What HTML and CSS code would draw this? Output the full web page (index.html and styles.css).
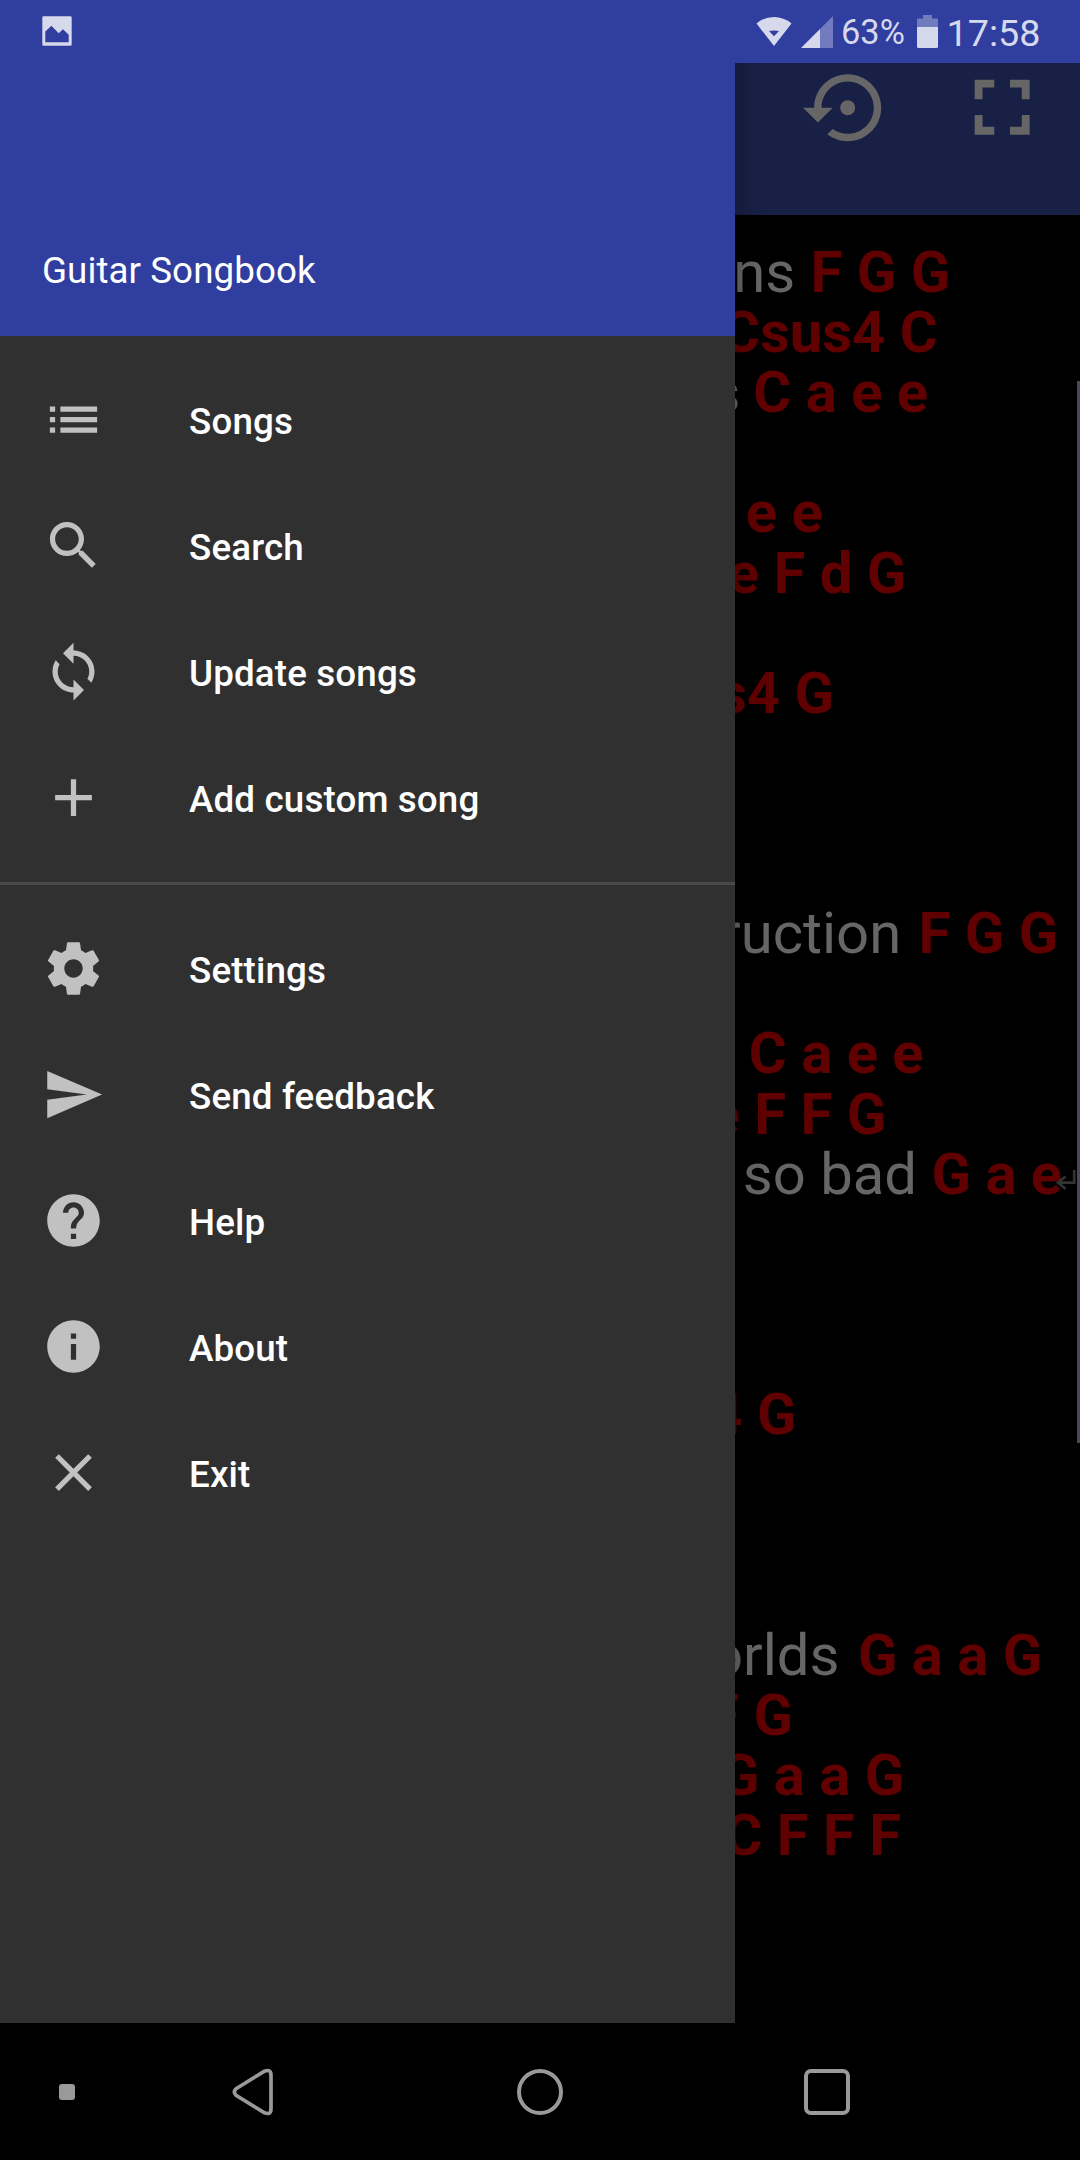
FILE: index.html
```html
<!DOCTYPE html>
<html lang="en">
<head>
<meta charset="utf-8">
<title>Guitar Songbook</title>
<link rel="stylesheet" href="styles.css">
</head>
<body>
<div class="phone">
  <header class="status-bar">
    <svg class="status-photo" viewBox="0 0 30 30"><path fill-rule="evenodd" d="M1.6.3h26.8q1.3 0 1.3 1.3v26.8q0 1.3-1.3 1.3H1.6Q.3 29.700.3 28.400V1.600Q.3.3 1.600.3zM3.300 15.600V26.300H26.700V18.700L21 13.300 16.700 17.300 9.400 9.800z"/></svg>
    <svg class="status-wifi" viewBox="0 0 36 30"><path fill-rule="evenodd" d="M.5 7.500Q8 1 18 1T35.500 7.500L18 30zM13 15Q18 13.800 23 15L18 20.200z"/></svg>
    <svg class="status-signal" viewBox="0 0 32 32"><path opacity=".4" d="M19 13 32 0V32H19z"/><path d="M0 32 19 13V32z"/></svg>
    <span class="status-percent">63%</span>
    <svg class="status-battery" viewBox="0 0 21 33"><path opacity=".4" d="M6 0H15V3.500H20Q21 3.500 21 4.500V12H0V4.500Q0 3.500 1 3.500H6z"/><path d="M0 12H21V31.500Q21 33 19.500 33H1.500Q0 33 0 31.500z"/></svg>
    <span class="status-clock">17:58</span>
  </header>

  <div class="screen">
    <main class="reader">
      <div class="app-bar">
        <svg class="icon-restore" viewBox="0 0 24 24"><path d="M14 12c0-1.100-.9-2-2-2s-2 .9-2 2 .9 2 2 2 2-.9 2-2zm-2-9c-4.970 0-9 4.030-9 9H0l4 4 4-4H5c0-3.870 3.130-7 7-7s7 3.130 7 7-3.130 7-7 7c-1.510 0-2.910-.49-4.060-1.300l-1.420 1.440C8.040 20.300 9.940 21 12 21c4.970 0 9-4.030 9-9s-4.030-9-9-9z"/></svg>
        <svg class="icon-fullscreen" viewBox="0 0 24 24"><path d="M7 14H5v5h5v-2H7v-3zm-2-4h2V7h3V5H5v5zm12 7h-3v2h5v-5h-2v3zM14 5v2h3v3h2V5h-5z"/></svg>
      </div>
      <div class="song">
        <p class="l1">ns <b>F G G</b></p>
        <p class="l2"><b>Csus4 C</b></p>
        <p class="l3">s <b>C a e e</b></p>
        <p></p>
        <p class="l5"><b>e e</b></p>
        <p class="l6"><b>e F d G</b></p>
        <p></p>
        <p class="l8"><b>s4 G</b></p>
        <p></p>
        <p></p>
        <p></p>
        <p class="l12">ruction <b>F G G</b></p>
        <p></p>
        <p class="l14"><b>C a e e</b></p>
        <p class="l15"><b>e F F G</b></p>
        <p class="l16">so bad <b>G a e</b><svg class="wrap-mark" viewBox="0 0 20 20"><path d="M18.200 0V12.700H2M9.500 6.500 2 12.700 9.500 18.800"/></svg></p>
        <p></p>
        <p></p>
        <p></p>
        <p class="l20"><b>4 G</b></p>
        <p></p>
        <p></p>
        <p></p>
        <p class="l24">orlds <b>G a a G</b></p>
        <p class="l25"><b>F G</b></p>
        <p class="l26"><b>G a a G</b></p>
        <p class="l27"><b>C F F F</b></p>
      </div>
      <div class="scrollbar"></div>
    </main>
  </div>

  <aside class="drawer">
    <div class="drawer-header">Guitar Songbook</div>
    <nav class="menu">
      <a class="item"><svg viewBox="0 0 24 24"><path d="M3 13h2v-2H3v2zm0 4h2v-2H3v2zm0-8h2V7H3v2zm4 4h14v-2H7v2zm0 4h14v-2H7v2zM7 7v2h14V7H7z"/></svg><span>Songs</span></a>
      <a class="item"><svg viewBox="0 0 24 24"><path d="M15.500 14h-.79l-.28-.27C15.410 12.590 16 11.110 16 9.500 16 5.910 13.090 3 9.500 3S3 5.910 3 9.500 5.910 16 9.500 16c1.610 0 3.090-.59 4.230-1.570l.27.28v.79l5 4.990L20.490 19l-4.990-5zm-6 0C7.010 14 5 11.990 5 9.500S7.010 5 9.500 5 14 7.010 14 9.500 11.990 14 9.500 14z"/></svg><span>Search</span></a>
      <a class="item"><svg viewBox="0 0 24 24"><path d="M12 4V1L8 5l4 4V6c3.310 0 6 2.690 6 6 0 1.010-.25 1.970-.7 2.800l1.460 1.460C19.540 15.030 20 13.570 20 12c0-4.420-3.580-8-8-8zm0 14c-3.310 0-6-2.690-6-6 0-1.010.25-1.970.7-2.800L5.240 7.740C4.460 8.970 4 10.430 4 12c0 4.420 3.580 8 8 8v3l4-4-4-4v3z"/></svg><span>Update songs</span></a>
      <a class="item"><svg viewBox="0 0 24 24"><path d="M19 13h-6v6h-2v-6H5v-2h6V5h2v6h6v2z"/></svg><span>Add custom song</span></a>
      <hr class="divider">
      <a class="item"><svg viewBox="0 0 24 24"><path d="M19.430 12.980c.04-.32.070-.64.070-.98s-.03-.66-.07-.98l2.110-1.650c.19-.15.240-.42.120-.64l-2-3.460c-.12-.22-.39-.3-.61-.22l-2.490 1c-.52-.4-1.080-.73-1.690-.98l-.38-2.650C14.460 2.180 14.250 2 14 2h-4c-.25 0-.46.18-.49.42l-.38 2.650c-.61.25-1.170.59-1.690.98l-2.490-1c-.23-.09-.49 0-.61.22l-2 3.460c-.13.22-.07.49.12.64l2.110 1.650c-.04.32-.07.65-.07.98s.03.66.07.98l-2.110 1.650c-.19.15-.24.42-.12.64l2 3.460c.12.22.39.3.61.22l2.490-1c.52.4 1.080.73 1.690.98l.38 2.650c.03.24.24.42.49.42h4c.25 0 .46-.18.49-.42l.38-2.650c.61-.25 1.170-.59 1.690-.98l2.490 1c.23.09.49 0 .61-.22l2-3.460c.12-.22.07-.49-.12-.64l-2.110-1.650zM12 15.500c-1.930 0-3.500-1.570-3.500-3.500s1.570-3.500 3.500-3.500 3.500 1.570 3.500 3.500-1.570 3.500-3.500 3.500z"/></svg><span>Settings</span></a>
      <a class="item"><svg viewBox="0 0 24 24"><path d="M2 3 22.900 12 2 21V14L17 12 2 10z"/></svg><span>Send feedback</span></a>
      <a class="item"><svg viewBox="0 0 24 24"><path d="M12 2C6.480 2 2 6.480 2 12s4.480 10 10 10 10-4.480 10-10S17.520 2 12 2zm1 17h-2v-2h2v2zm2.070-7.750l-.9.920C13.450 12.900 13 13.500 13 15h-2v-.5c0-1.100.45-2.100 1.170-2.830l1.240-1.260c.37-.36.590-.86.590-1.410 0-1.100-.9-2-2-2s-2 .9-2 2H8c0-2.210 1.790-4 4-4s4 1.790 4 4c0 .88-.36 1.680-.93 2.250z"/></svg><span>Help</span></a>
      <a class="item"><svg viewBox="0 0 24 24"><path d="M12 2C6.480 2 2 6.480 2 12s4.480 10 10 10 10-4.480 10-10S17.520 2 12 2zm1 15h-2v-6h2v6zm0-8h-2V7h2v2z"/></svg><span>About</span></a>
      <a class="item"><svg viewBox="0 0 24 24"><path d="M19 6.410 17.590 5 12 10.590 6.410 5 5 6.410 10.590 12 5 17.590 6.410 19 12 13.410 17.590 19 19 17.590 13.410 12z"/></svg><span>Exit</span></a>
    </nav>
  </aside>

  <footer class="nav-bar">
    <i class="nav-dot"></i>
    <svg class="nav-back" viewBox="0 0 42 48"><path d="M4 20.800 32 3.500Q39 .3 39 7.500V40.500Q39 47.700 32 44.500L4 27.200Q.8 24 4 20.800z"/></svg>
    <i class="nav-home"></i>
    <i class="nav-recents"></i>
  </footer>
</div>
</body>
</html>
```
FILE: styles.css
```css
* { box-sizing: border-box; }

body {
  margin: 0;
  background: #000;
  font-family: Roboto, sans-serif;
}

.phone {
  position: relative;
  display: flex;
  flex-direction: column;
  width: 1080px;
  height: 2160px;
  overflow: hidden;
  background: #000;
}

svg { display: block; flex: none; }

/* Status bar */
.status-bar {
  display: flex;
  align-items: flex-start;
  height: 63px;
  background: #303e9f;
  color: #d6d8ec;
  fill: #d6d8ec;
  position: relative;
  z-index: 2;
}
.status-photo { width: 30px; height: 30px; margin: 16px 684px 0 42px; }
.status-wifi { width: 36px; height: 30px; margin: 16px 9px 0 0; }
.status-signal { width: 32px; height: 32px; margin: 16px 0 0; }
.status-percent { width: 76px; margin: 12px 0 0 8px; font-size: 34.400px; line-height: 41px; }
.status-battery { width: 21px; height: 33px; margin-top: 15px; }
.status-clock { margin: 11px 0 0 8.500px; font-size: 37.750px; line-height: 44px; }

/* Dimmed song view behind the drawer */
.screen { height: 1960px; }
.reader { position: relative; height: 100%; }
.app-bar {
  display: flex;
  justify-content: flex-end;
  height: 152px;
  padding-right: 30.300px;
  background: #182046;
  fill: #666;
}
.icon-restore { width: 89.400px; height: 89.400px; margin-right: 63px; }
.icon-fullscreen { width: 94.300px; height: 94.300px; margin-top: -2.700px; }

.song {
  padding-top: 27px;
  color: #666;
  font-size: 58px;
  line-height: 60.115px;
  text-align: right;
  white-space: nowrap;
}
.song p { position: relative; height: 60.115px; margin: 0; }
.song b { color: #600000; font-weight: 700; }
.song .l1 { padding-right: 129.700px; }
.song .l1 b { margin-left: 1px; }
.song .l2 { padding-right: 142.300px; }
.song .l3 { padding-right: 151.800px; }
.song .l3 b { margin-left: -1.500px; }
.song .l5 { padding-right: 257.100px; }
.song .l6 { padding-right: 173.700px; }
.song .l8 { padding-right: 246px; }
.song .l12 { padding-right: 21.700px; }
.song .l12 b { margin-left: 3px; }
.song .l14 { padding-right: 156.300px; }
.song .l15 { padding-right: 193.700px; }
.song .l16 { padding-right: 17.800px; }
.song .l20 { padding-right: 283.500px; }
.song .l24 { padding-right: 37.700px; }
.song .l24 b { margin-left: 4px; }
.song .l25 { padding-right: 287px; }
.song .l26 { padding-right: 175.700px; }
.song .l27 { padding-right: 178.900px; }
.wrap-mark {
  position: absolute;
  right: 4px;
  top: 26px;
  width: 20px;
  height: 20px;
  fill: none;
  stroke: #333;
  stroke-width: 2.700;
}
.scrollbar {
  position: absolute;
  top: 318px;
  right: 0;
  width: 3px;
  height: 1062px;
  background: #434b57;
}

/* Navigation drawer */
.drawer {
  position: absolute;
  top: 0;
  left: 0;
  z-index: 1;
  width: 735px;
  height: 2023px;
  background: #303030;
  box-shadow: 0 0 24px rgba(0, 0, 0, .35);
}
.drawer-header {
  display: flex;
  align-items: flex-end;
  height: 336px;
  padding: 0 42px 43.500px;
  background: #303e9f;
  color: #fff;
  font-size: 36.750px;
  line-height: 44px;
  letter-spacing: .06px;
}
.menu { padding-top: 20.500px; }
.item {
  display: flex;
  align-items: center;
  gap: 84px;
  height: 126px;
  padding-left: 42px;
  color: #fff;
  font-size: 36.750px;
  font-weight: 500;
  letter-spacing: .14px;
}
.item span { padding-top: 3px; }
.item svg { width: 63px; height: 63px; fill: #c1c1c1; }
.divider {
  height: 3px;
  margin: 21px 0;
  border: 0;
  background: #4a4a4a;
}

/* System navigation */
.nav-bar {
  display: flex;
  align-items: center;
  height: 137px;
  padding-left: 59px;
  background: #000;
}
.nav-dot { width: 16px; height: 16px; border-radius: 3px; background: #999; }
.nav-back { width: 42px; height: 48px; margin-left: 157px; fill: none; stroke: #999; stroke-width: 3.700; }
.nav-home { width: 46px; height: 46px; margin-left: 243px; border: 4px solid #999; border-radius: 50%; }
.nav-recents { width: 46px; height: 46px; margin-left: 241px; border: 4px solid #999; border-radius: 7px; }
```
